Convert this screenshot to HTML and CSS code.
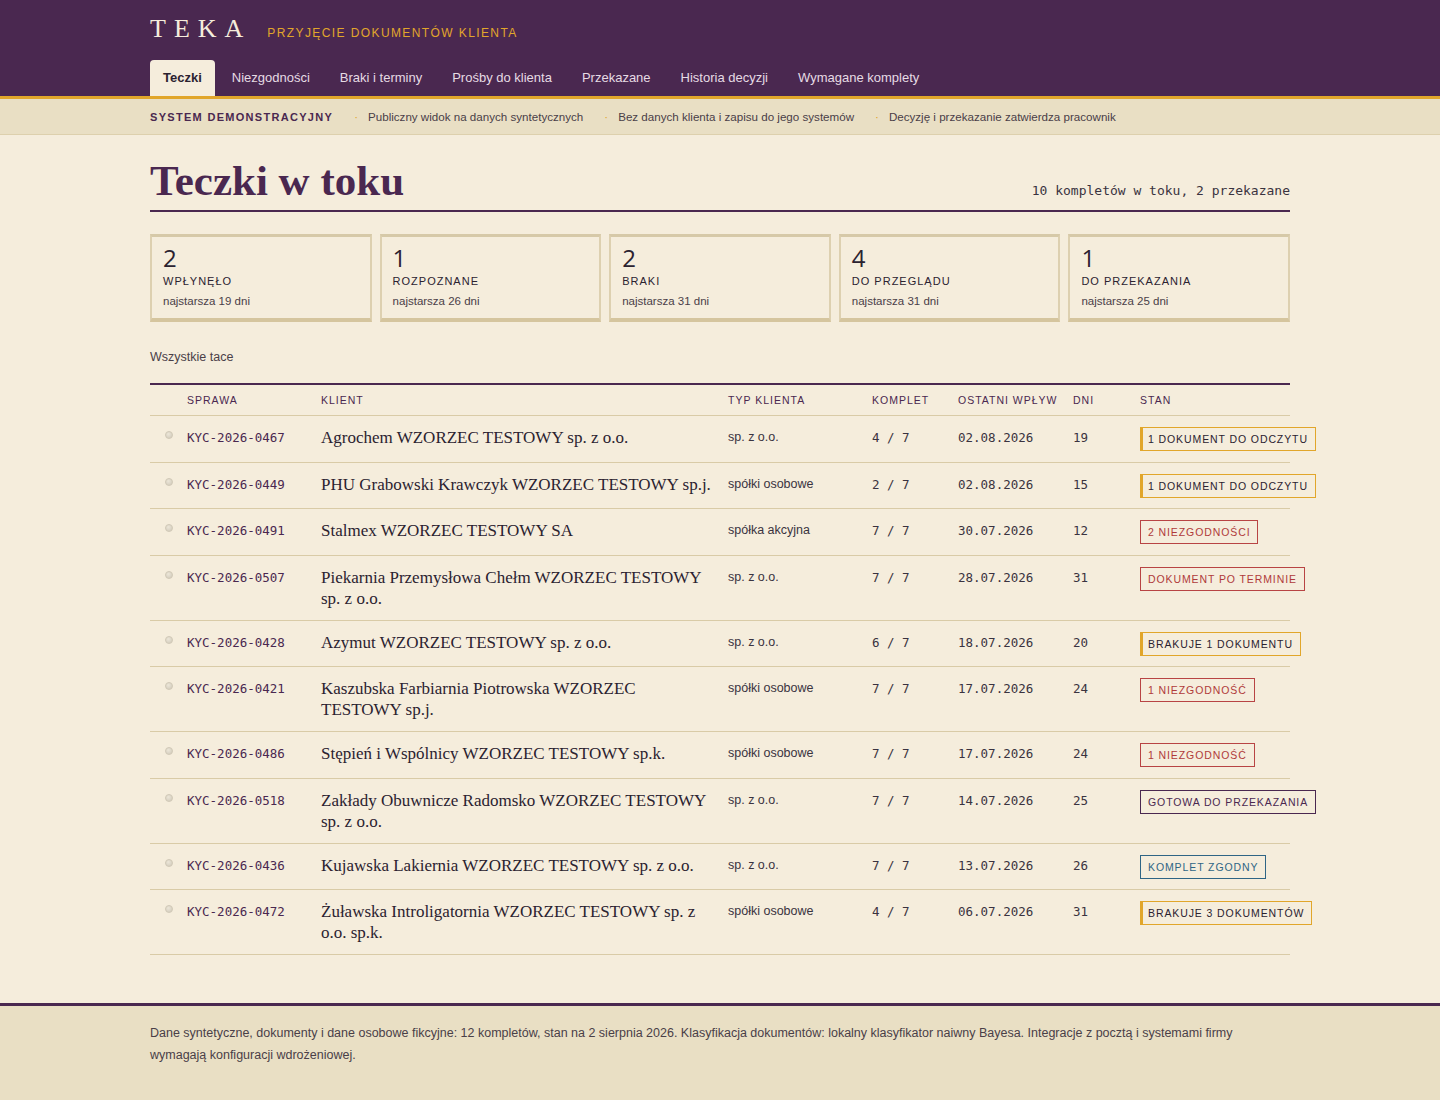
FILE: index.html
```html
<!DOCTYPE html>
<html lang="pl">
    <head>
        <meta charset="utf-8">
        <title>Teka - Teczki w toku</title>
        <link rel="stylesheet" href="styles.css">
    </head>
    <body>
        <header class="top">
            <div class="wrap">
                <div class="brand">
                    <span class="logo">TEKA</span>
                    <span class="tagline">Przyjęcie dokumentów klienta</span>
                </div>
                <nav class="tabs">
                    <a class="tab active" href="#">Teczki</a>
                    <a class="tab" href="#">Niezgodności</a>
                    <a class="tab" href="#">Braki i terminy</a>
                    <a class="tab" href="#">Prośby do klienta</a>
                    <a class="tab" href="#">Przekazane</a>
                    <a class="tab" href="#">Historia decyzji</a>
                    <a class="tab" href="#">Wymagane komplety</a>
                </nav>
            </div>
        </header>
        <div class="notice">
            <div class="wrap notice-row">
                <strong>System demonstracyjny</strong>
                <span class="note">Publiczny widok na danych syntetycznych</span>
                <span class="note">Bez danych klienta i zapisu do jego systemów</span>
                <span class="note">Decyzję i przekazanie zatwierdza pracownik</span>
            </div>
        </div>

        <main class="wrap page">
            <div class="title-row">
                <h1>Teczki w toku</h1>
                <span class="summary">10 kompletów w toku, 2 przekazane</span>
            </div>

            <div class="stats">
                <div class="stat">
                    <div class="stat-num">2</div>
                    <div class="stat-label">Wpłynęło</div>
                    <div class="stat-age">najstarsza 19 dni</div>
                </div>
                <div class="stat">
                    <div class="stat-num">1</div>
                    <div class="stat-label">Rozpoznane</div>
                    <div class="stat-age">najstarsza 26 dni</div>
                </div>
                <div class="stat">
                    <div class="stat-num">2</div>
                    <div class="stat-label">Braki</div>
                    <div class="stat-age">najstarsza 31 dni</div>
                </div>
                <div class="stat">
                    <div class="stat-num">4</div>
                    <div class="stat-label">Do przeglądu</div>
                    <div class="stat-age">najstarsza 31 dni</div>
                </div>
                <div class="stat">
                    <div class="stat-num">1</div>
                    <div class="stat-label">Do przekazania</div>
                    <div class="stat-age">najstarsza 25 dni</div>
                </div>
            </div>

            <p class="filter">Wszystkie tace</p>

            <table class="cases">
                <colgroup>
                    <col class="c-dot">
                    <col class="c-id">
                    <col class="c-client">
                    <col class="c-type">
                    <col class="c-set">
                    <col class="c-date">
                    <col class="c-days">
                    <col class="c-state">
                </colgroup>
                <thead>
                    <tr>
                        <th></th>
                        <th>Sprawa</th>
                        <th>Klient</th>
                        <th>Typ klienta</th>
                        <th>Komplet</th>
                        <th>Ostatni wpływ</th>
                        <th>Dni</th>
                        <th>Stan</th>
                    </tr>
                </thead>
                <tbody>
                    <tr>
                        <td><span class="dot"></span></td>
                        <td class="mono id">KYC-2026-0467</td>
                        <td class="client">Agrochem WZORZEC TESTOWY sp. z o.o.</td>
                        <td class="type">sp. z o.o.</td>
                        <td class="mono">4 / 7</td>
                        <td class="mono">02.08.2026</td>
                        <td class="mono">19</td>
                        <td><span class="badge gold">1 dokument do odczytu</span></td>
                    </tr>
                    <tr>
                        <td><span class="dot"></span></td>
                        <td class="mono id">KYC-2026-0449</td>
                        <td class="client">PHU Grabowski Krawczyk WZORZEC TESTOWY sp.j.</td>
                        <td class="type">spółki osobowe</td>
                        <td class="mono">2 / 7</td>
                        <td class="mono">02.08.2026</td>
                        <td class="mono">15</td>
                        <td><span class="badge gold">1 dokument do odczytu</span></td>
                    </tr>
                    <tr>
                        <td><span class="dot"></span></td>
                        <td class="mono id">KYC-2026-0491</td>
                        <td class="client">Stalmex WZORZEC TESTOWY SA</td>
                        <td class="type">spółka akcyjna</td>
                        <td class="mono">7 / 7</td>
                        <td class="mono">30.07.2026</td>
                        <td class="mono">12</td>
                        <td><span class="badge red">2 niezgodności</span></td>
                    </tr>
                    <tr>
                        <td><span class="dot"></span></td>
                        <td class="mono id">KYC-2026-0507</td>
                        <td class="client">Piekarnia Przemysłowa Chełm WZORZEC TESTOWY sp. z o.o.</td>
                        <td class="type">sp. z o.o.</td>
                        <td class="mono">7 / 7</td>
                        <td class="mono">28.07.2026</td>
                        <td class="mono">31</td>
                        <td><span class="badge red">Dokument po terminie</span></td>
                    </tr>
                    <tr>
                        <td><span class="dot"></span></td>
                        <td class="mono id">KYC-2026-0428</td>
                        <td class="client">Azymut WZORZEC TESTOWY sp. z o.o.</td>
                        <td class="type">sp. z o.o.</td>
                        <td class="mono">6 / 7</td>
                        <td class="mono">18.07.2026</td>
                        <td class="mono">20</td>
                        <td><span class="badge gold">Brakuje 1 dokumentu</span></td>
                    </tr>
                    <tr>
                        <td><span class="dot"></span></td>
                        <td class="mono id">KYC-2026-0421</td>
                        <td class="client">Kaszubska Farbiarnia Piotrowska WZORZEC TESTOWY sp.j.</td>
                        <td class="type">spółki osobowe</td>
                        <td class="mono">7 / 7</td>
                        <td class="mono">17.07.2026</td>
                        <td class="mono">24</td>
                        <td><span class="badge red">1 niezgodność</span></td>
                    </tr>
                    <tr>
                        <td><span class="dot"></span></td>
                        <td class="mono id">KYC-2026-0486</td>
                        <td class="client">Stępień i Wspólnicy WZORZEC TESTOWY sp.k.</td>
                        <td class="type">spółki osobowe</td>
                        <td class="mono">7 / 7</td>
                        <td class="mono">17.07.2026</td>
                        <td class="mono">24</td>
                        <td><span class="badge red">1 niezgodność</span></td>
                    </tr>
                    <tr>
                        <td><span class="dot"></span></td>
                        <td class="mono id">KYC-2026-0518</td>
                        <td class="client">Zakłady Obuwnicze Radomsko WZORZEC TESTOWY sp. z o.o.</td>
                        <td class="type">sp. z o.o.</td>
                        <td class="mono">7 / 7</td>
                        <td class="mono">14.07.2026</td>
                        <td class="mono">25</td>
                        <td><span class="badge purple">Gotowa do przekazania</span></td>
                    </tr>
                    <tr>
                        <td><span class="dot"></span></td>
                        <td class="mono id">KYC-2026-0436</td>
                        <td class="client">Kujawska Lakiernia WZORZEC TESTOWY sp. z o.o.</td>
                        <td class="type">sp. z o.o.</td>
                        <td class="mono">7 / 7</td>
                        <td class="mono">13.07.2026</td>
                        <td class="mono">26</td>
                        <td><span class="badge blue">Komplet zgodny</span></td>
                    </tr>
                    <tr>
                        <td><span class="dot"></span></td>
                        <td class="mono id">KYC-2026-0472</td>
                        <td class="client">Żuławska Introligatornia WZORZEC TESTOWY sp. z o.o. sp.k.</td>
                        <td class="type">spółki osobowe</td>
                        <td class="mono">4 / 7</td>
                        <td class="mono">06.07.2026</td>
                        <td class="mono">31</td>
                        <td><span class="badge gold">Brakuje 3 dokumentów</span></td>
                    </tr>
                </tbody>
            </table>
        </main>

        <footer class="foot">
            <div class="wrap">
                <p>Dane syntetyczne, dokumenty i dane osobowe fikcyjne: 12 kompletów, stan na 2 sierpnia 2026. Klasyfikacja dokumentów: lokalny klasyfikator naiwny Bayesa. Integracje z pocztą i systemami firmy wymagają konfiguracji wdrożeniowej.</p>
            </div>
        </footer>
    </body>
</html>
```

FILE: styles.css
```css
*{
    box-sizing: border-box;
}
body{
    margin: 0;
    min-height: 100vh;
    display: flex;
    flex-direction: column;
    background-color: #f5eddc;
    color: #2b2230;
    font-family: "Liberation Sans", Arial, sans-serif;
}
.wrap{
    width: 1140px;
    margin: 0 auto;
}

/* header */
.top{
    background-color: #4a2850;
    border-bottom: 3px solid #e1a62b;
}
.brand{
    display: flex;
    align-items: baseline;
    padding-top: 14px;
    height: 60px;
}
.logo{
    font-family: "Liberation Serif", "Times New Roman", serif;
    font-size: 26px;
    letter-spacing: 8px;
    color: #f5eddc;
}
.tagline{
    margin-left: 16px;
    font-size: 12px;
    letter-spacing: 1.4px;
    text-transform: uppercase;
    color: #e1a62b;
}
.tabs{
    display: flex;
    gap: 4px;
}
.tab{
    display: block;
    height: 36px;
    line-height: 36px;
    padding: 0 13px;
    font-size: 13px;
    color: #e6dbe4;
    text-decoration: none;
}
.tab.active{
    background-color: #f5eddc;
    color: #2b2230;
    font-weight: bold;
    border-radius: 4px 4px 0 0;
}

/* notice bar */
.notice{
    background-color: #e9dfc4;
    border-bottom: 1px solid #ddd0ad;
}
.notice-row{
    display: flex;
    align-items: center;
    height: 35px;
    font-size: 11.6px;
    color: #4a4048;
}
.notice-row strong{
    font-size: 11px;
    letter-spacing: 1.3px;
    text-transform: uppercase;
    color: #4a2850;
}
.note{
    margin-left: 21px;
}
.note:before{
    content: "·";
    color: #e1a62b;
    margin-right: 10px;
}

/* page */
.page{
    flex: 1;
    padding-top: 22px;
    padding-bottom: 48px;
}
.title-row{
    display: flex;
    justify-content: space-between;
    align-items: baseline;
    border-bottom: 2px solid #4a2850;
    padding-bottom: 6px;
}
h1{
    margin: 0;
    font-family: "Liberation Serif", "Times New Roman", serif;
    font-size: 43px;
    line-height: 47px;
    color: #4a2850;
}
.summary{
    font-family: "DejaVu Sans Mono", monospace;
    font-size: 13px;
    color: #3a3340;
}
.stats{
    display: grid;
    grid-template-columns: repeat(5, 1fr);
    gap: 8px;
    margin-top: 22px;
}
.stat{
    height: 88px;
    padding: 7px 11px 0;
    border: 2px solid #ddd0b0;
    border-top: 3px solid #d6c9a8;
    border-bottom: 4px solid #d5c59e;
}
.stat-num{
    font-family: "Open Sans", sans-serif;
    font-size: 24px;
    line-height: 28px;
    color: #2b2230;
}
.stat-label{
    margin-top: 1px;
    font-size: 11px;
    line-height: 16px;
    letter-spacing: 1px;
    text-transform: uppercase;
    color: #2b2230;
}
.stat-age{
    margin-top: 4px;
    font-size: 11.5px;
    line-height: 16px;
    color: #4a4048;
}
.filter{
    margin: 27px 0 0;
    font-size: 12.5px;
    line-height: 16px;
    color: #4a4048;
}

/* table */
.cases{
    width: 100%;
    margin-top: 18px;
    border-collapse: collapse;
    table-layout: fixed;
    border-top: 2px solid #4a2850;
}
.c-dot{ width: 37px; }
.c-id{ width: 134px; }
.c-client{ width: 407px; }
.c-type{ width: 144px; }
.c-set{ width: 86px; }
.c-date{ width: 115px; }
.c-days{ width: 67px; }
.c-state{ width: 150px; }
.cases th{
    padding: 8px 0;
    font-size: 10.5px;
    line-height: 14px;
    font-weight: normal;
    letter-spacing: 1px;
    text-transform: uppercase;
    text-align: left;
    color: #4a2850;
    border-bottom: 1px solid #d9cba7;
}
.cases td{
    padding: 11px 14px 10.7px 0;
    vertical-align: top;
    line-height: 21px;
    border-bottom: 1px solid #d9cba7;
    white-space: nowrap;
}
.cases td:first-child{
    padding-left: 15px;
    padding-right: 0;
}
.dot{
    display: block;
    width: 8px;
    height: 8px;
    margin-top: 4px;
    border-radius: 50%;
    background: radial-gradient(circle at 40% 35%, #ece6d8, #cfc8b8);
    border: 1px solid #d2cab8;
}
.mono{
    font-family: "DejaVu Sans Mono", monospace;
    font-size: 12.5px;
    color: #3a3340;
}
.id{
    color: #4a2850;
}
.cases td.client{
    white-space: normal;
    font-family: "Liberation Serif", "Times New Roman", serif;
    font-size: 17px;
    color: #2b2230;
}
.type{
    font-size: 12.5px;
    color: #3a3340;
}
.badge{
    display: inline-block;
    vertical-align: top;
    height: 24px;
    line-height: 22px;
    padding: 0 7px;
    font-size: 10.5px;
    letter-spacing: 0.9px;
    text-transform: uppercase;
    border: 1px solid;
}
.badge.gold{
    border-color: #e1a62b;
    border-left-width: 3px;
    padding-left: 5px;
    color: #2b2230;
}
.badge.red{
    border-color: #b84444;
    color: #b03a3a;
}
.badge.purple{
    border-color: #4a2850;
    color: #4a2850;
}
.badge.blue{
    border-color: #2f6585;
    color: #2f6585;
}

/* footer */
.foot{
    background-color: #e9dfc4;
    border-top: 3px solid #4a2850;
    padding: 16px 0 35px;
}
.foot p{
    margin: 0;
    font-size: 12.5px;
    line-height: 22px;
    color: #4a4048;
}
```
